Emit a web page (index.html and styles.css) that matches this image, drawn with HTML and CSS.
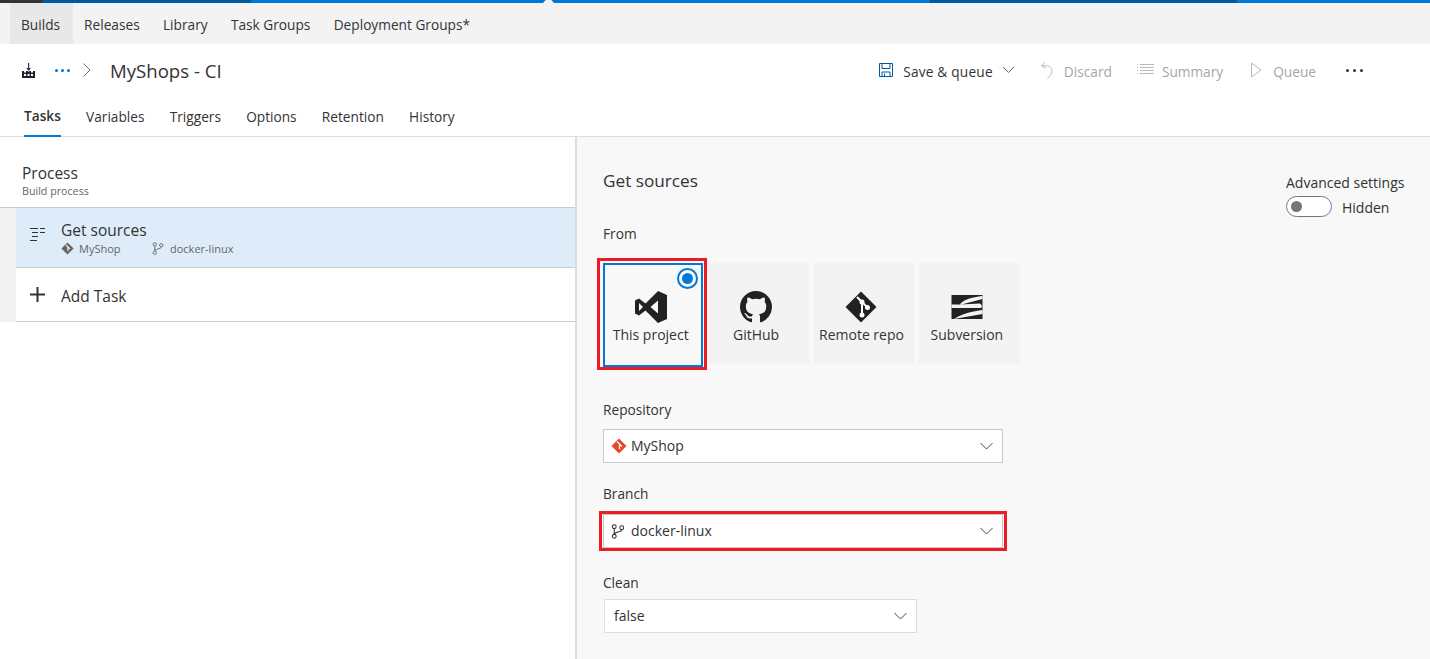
FILE: index.html
```html
<!doctype html>
<html>
  <head>
    <title>MyShops - CI</title>
    <meta name="viewport" content="width=device-width, initial-scale=1">
    <link rel="stylesheet" href="styles.css">
  </head>
  <body>
    <div class="strip">
      <span class="strip-a"></span><span class="strip-b"></span><span class="strip-c"></span><span class="strip-b strip-d"></span><span class="strip-c strip-e"></span>
    </div>

    <nav class="hub-nav">
      <a class="hub-item selected">Builds</a>
      <a class="hub-item">Releases</a>
      <a class="hub-item">Library</a>
      <a class="hub-item">Task Groups</a>
      <a class="hub-item">Deployment Groups*</a>
    </nav>

    <header class="title-row">
      <svg class="build-icon" width="16" height="16" viewBox="0 0 16 16"><path d="M8 1h1.200v5H11L8.600 9 6.200 6H8z" fill="#1b3a5c"/><path d="M2 9h2v1.500h2V9h1.500l1 1 1-1H11v1.500h2V9h2v7H2z" fill="#222"/><path d="M4 12h2v2H4zM7.500 12h2v2h-2zM11 12h2v2h-2z" fill="#fff"/></svg>
      <span class="crumb-dots"><i></i><i></i><i></i></span>
      <svg class="crumb-sep" width="10" height="16" viewBox="0 0 10 16"><path d="M1.500 1.500 8 8l-6.500 6.500" fill="none" stroke="#777" stroke-width="1"/></svg>
      <h1 class="def-name">MyShops - CI</h1>
      <div class="commands">
        <span class="cmd">
          <svg width="16" height="16" viewBox="0 0 16 16"><path d="M1.500 1.500h13v13h-13zM4 1.500v5h8v-5M4 14.500V10h8v4.500M6.500 11.500v3" fill="none" stroke="#005a9e" stroke-width="1"/></svg>
          <span class="cmd-label cmd-label-save">Save &amp; queue</span>
          <svg class="cmd-chevron" width="13" height="8" viewBox="0 0 13 8"><path d="M1 1l5.500 5.500L12 1" fill="none" stroke="#666"/></svg>
        </span>
        <span class="cmd off cmd-discard">
          <svg width="14" height="18" viewBox="0 0 14 18"><path d="M5 1 1.500 5 6 7M2 5c6-1.500 10 1 10 5 0 3-2 5-4.500 7.500" fill="none" stroke="#bbb"/></svg>
          <span class="cmd-label">Discard</span>
        </span>
        <span class="cmd off cmd-summary">
          <svg width="17" height="12" viewBox="0 0 17 12"><path d="M0 .5h1M0 3.500h1M0 6.500h1M0 9.500h1M3 .5h14M3 3.500h14M3 6.500h14M3 9.500h14" stroke="#bbb"/></svg>
          <span class="cmd-label">Summary</span>
        </span>
        <span class="cmd off cmd-queue">
          <svg width="11" height="16" viewBox="0 0 11 16"><path d="M.5 1v14L10 8z" fill="none" stroke="#bbb"/></svg>
          <span class="cmd-label">Queue</span>
        </span>
        <span class="cmd-more"><i></i><i></i><i></i></span>
      </div>
    </header>

    <div class="tabs">
      <a class="tab active">Tasks</a>
      <a class="tab">Variables</a>
      <a class="tab">Triggers</a>
      <a class="tab">Options</a>
      <a class="tab">Retention</a>
      <a class="tab">History</a>
    </div>

    <main class="editor">
      <section class="process">
        <div class="process-head">
          <div class="process-title">Process</div>
          <div class="process-sub">Build process</div>
        </div>
        <div class="phase-list">
          <div class="phase selected">
            <svg class="phase-icon phase-icon-sources" width="16" height="14" viewBox="0 0 16 14"><path d="M0 .5h8M10 .5h5M2 4.500h6M10 4.500h5M2 8.500h6M0 12.500h7" stroke="#333" fill="none"/></svg>
            <div>
              <div class="phase-name">Get sources</div>
              <div class="phase-meta">
                <svg width="13" height="13" viewBox="0 0 16 16"><path d="M8 .5 15.500 8 8 15.500.5 8z" fill="#666"/><path d="M6 3.500 8.500 6v5M8.500 6 11 8.500" stroke="#fff" stroke-width="1.300" fill="none"/></svg>
                <span class="meta-repo">MyShop</span>
                <svg width="12" height="13" viewBox="0 0 12 14"><circle cx="2.500" cy="2.500" r="1.800" fill="none" stroke="#666"/><circle cx="2.500" cy="11.500" r="1.800" fill="none" stroke="#666"/><circle cx="9.500" cy="3.500" r="1.800" fill="none" stroke="#666"/><path d="M2.500 4.500v5M9.500 5.500c0 2-7 2-7 4" fill="none" stroke="#666"/></svg>
                <span class="meta-branch">docker-linux</span>
              </div>
            </div>
          </div>
          <div class="phase add">
            <svg class="phase-icon" width="16" height="16" viewBox="0 0 16 16"><path d="M6.500 0h2v6.500H15v2H8.500V15h-2V8.500H0v-2h6.500z" fill="#333"/></svg>
            <div class="phase-name">Add Task</div>
          </div>
        </div>
      </section>

      <section class="details">
        <div class="advanced">
          <div>Advanced settings</div>
          <div class="toggle-row"><span class="toggle"><i></i></span><span class="toggle-label">Hidden</span></div>
        </div>

        <h2 class="details-title">Get sources</h2>

        <label class="field-label">From</label>
        <div class="sources">
          <div class="source selected">
            <span class="radio"><i></i></span>
            <svg width="32" height="32" viewBox="0 0 32 32"><path d="M23 0l9 4v24l-9 4-12.500-12.500L4 24.500l-4-2v-13l4-2 6.500 5zM23 9.500 15.500 16l7.500 6.500zM4 12v8l4-4z" fill="#222" fill-rule="evenodd"/></svg>
            <span class="source-name">This project</span>
          </div>
          <div class="source">
            <svg width="32" height="32" viewBox="0 0 16 16"><path d="M8 0C3.580 0 0 3.580 0 8c0 3.540 2.290 6.530 5.470 7.590.4.070.55-.17.55-.38 0-.19-.01-.82-.01-1.490-2.010.37-2.530-.49-2.690-.94-.09-.23-.48-.94-.82-1.130-.28-.15-.68-.52-.01-.53.630-.01 1.080.58 1.230.82.720 1.210 1.870.87 2.330.66.070-.52.280-.87.510-1.070-1.780-.2-3.640-.89-3.640-3.950 0-.87.310-1.590.820-2.150-.08-.2-.36-1.020.08-2.120 0 0 .67-.21 2.200.82.640-.18 1.320-.27 2-.27s1.360.09 2 .27c1.530-1.040 2.200-.82 2.200-.82.440 1.100.160 1.920.08 2.120.51.560.82 1.270.82 2.150 0 3.070-1.870 3.750-3.650 3.950.290.250.540.730.540 1.480 0 1.070-.01 1.930-.01 2.200 0 .21.150.46.550.38A8.010 8.010 0 0 0 16 8c0-4.420-3.580-8-8-8z" fill="#222"/></svg>
            <span class="source-name">GitHub</span>
          </div>
          <div class="source">
            <svg width="32" height="32" viewBox="0 0 32 32"><path d="M16 .5 31.500 16 16 31.500.5 16z" fill="#222"/><path d="M12 6l5 5v13M17 11l5.500 5.500" stroke="#fff" stroke-width="2" fill="none"/><circle cx="17" cy="24" r="2.500" fill="#fff"/><circle cx="22.500" cy="16.500" r="2.500" fill="#fff"/><circle cx="17" cy="11" r="2.500" fill="#fff"/></svg>
            <span class="source-name">Remote repo</span>
          </div>
          <div class="source">
            <svg width="32" height="32" viewBox="0 -4 32 32"><path d="M.5 0h31v24H.5z" fill="#222"/><path d="M31.500 1C21 2 11 5 8.500 10l23-6zM.5 9.500h9L29 8.500c2.500 2 2.500 4 .5 4.500H.5zM31.500 15C22 16 10 19 3 24l28.500-5z" fill="#f3f3f3"/></svg>
            <span class="source-name">Subversion</span>
          </div>
        </div>

        <label class="field-label label-repo">Repository</label>
        <div class="combo combo-wide">
          <svg class="repo-icon" width="16" height="16" viewBox="0 0 16 16"><path d="M8 .5 15.500 8 8 15.500.5 8z" fill="#e8472b"/><path d="M6 3.500 8.500 6v5M8.500 6 11 8.500" stroke="#fff" stroke-width="1.300" fill="none"/></svg>
          <span class="combo-value">MyShop</span>
          <svg class="combo-chevron" width="13" height="8" viewBox="0 0 13 8"><path d="M.5 1l6 6 6-6" fill="none" stroke="#444"/></svg>
        </div>

        <label class="field-label label-branch">Branch</label>
        <div class="combo combo-wide combo-flagged">
          <svg width="14" height="15" viewBox="0 0 12 14"><circle cx="2.500" cy="2.500" r="1.800" fill="none" stroke="#333"/><circle cx="2.500" cy="11.500" r="1.800" fill="none" stroke="#333"/><circle cx="9.500" cy="3.500" r="1.800" fill="none" stroke="#333"/><path d="M2.500 4.500v5M9.500 5.500c0 2-7 2-7 4" fill="none" stroke="#333"/></svg>
          <span class="combo-value">docker-linux</span>
          <svg class="combo-chevron" width="13" height="8" viewBox="0 0 13 8"><path d="M.5 1l6 6 6-6" fill="none" stroke="#444"/></svg>
        </div>

        <label class="field-label label-clean">Clean</label>
        <div class="combo combo-narrow">
          <span class="combo-value">false</span>
          <svg class="combo-chevron" width="13" height="8" viewBox="0 0 13 8"><path d="M.5 1l6 6 6-6" fill="none" stroke="#444"/></svg>
        </div>
      </section>
    </main>
  </body>
</html>
```

FILE: styles.css
```css
* {
    box-sizing: border-box;
}
html, body {
    height: 100%;
}
body {
    margin: 0;
    overflow: hidden;
    display: flex;
    flex-direction: column;
    font-family: "Open Sans", sans-serif;
    font-size: 13.7px;
    color: #333;
    background: #fff;
}

/* Top colour strip */
.strip {
    position: relative;
    display: flex;
    height: 3px;
    flex: none;
}
.strip::after {
    content: "";
    position: absolute;
    top: 0;
    left: 543px;
    width: 11px;
    height: 3px;
    background: #f3f3f3;
    clip-path: polygon(25% 0, 75% 0, 100% 100%, 0 100%);
}
.strip-a {
    width: 42px;
    background: #333;
}
.strip-b {
    width: 209px;
    background: #005a9e;
}
.strip-c {
    width: 679px;
    background: #0078d7;
}
.strip-d {
    width: 307px;
}
.strip-e {
    flex: 1;
}

/* Hub navigation */
.hub-nav {
    display: flex;
    flex: none;
    height: 41px;
    padding-left: 10px;
    background: #f3f3f3;
}
.hub-item {
    display: flex;
    align-items: center;
    padding: 1px 11px 0;
    margin-right: 1.3px;
}
.hub-item.selected {
    padding-right: 13px;
    margin-right: 0;
    background: #e8e8e8;
}

/* Title row */
.title-row {
    display: flex;
    flex: none;
    align-items: center;
    height: 52px;
    padding-left: 20px;
}
.crumb-dots {
    display: flex;
    gap: 3px;
    margin-left: 19px;
}
.crumb-dots i {
    width: 3px;
    height: 3px;
    border-radius: 50%;
    background: #0078d7;
}
.crumb-sep {
    margin-left: 12px;
}
.def-name {
    margin: 0 0 0 18px;
    font-size: 18.6px;
    font-weight: 400;
}
.commands {
    display: flex;
    align-items: center;
    margin-left: auto;
    padding-right: 67px;
}
.cmd {
    display: flex;
    align-items: center;
    gap: 9px;
}
.cmd-label {
    padding-top: 3px;
}
.cmd-label-save {
    letter-spacing: 0.2px;
}
.cmd.off {
    color: #a6a6a6;
}
.cmd-discard {
    margin-left: 25px;
    gap: 10px;
}
.cmd-summary {
    margin-left: 25px;
    gap: 8px;
}
.cmd-queue {
    margin-left: 28px;
    gap: 11px;
}
.cmd-more {
    display: flex;
    gap: 4px;
    margin-left: 30px;
}
.cmd-more i {
    width: 3px;
    height: 3px;
    border-radius: 50%;
    background: #333;
}

/* Tabs */
.tabs {
    display: flex;
    flex: none;
    gap: 25.2px;
    height: 41px;
    padding-left: 24px;
    border-bottom: 1px solid #ddd;
}
.tab {
    display: flex;
    align-items: center;
    margin-bottom: -1px;
}
.tab.active {
    font-weight: 600;
    border-bottom: 2px solid #0078d7;
}

/* Editor split */
.editor {
    display: flex;
    flex: 1;
    min-height: 0;
}
.process {
    width: 577px;
    flex: none;
    border-right: 2px solid #ddd;
}
.process-head {
    height: 70px;
    padding: 26px 0 0 22px;
}
.process-title {
    font-size: 15.5px;
    line-height: 21px;
}
.process-sub {
    font-size: 10.7px;
    line-height: 14px;
    color: #666;
}
.phase-list {
    padding-left: 16px;
    background: linear-gradient(#f3f3f3, #f3f3f3) no-repeat 0 0 / 16px 100%;
    border-top: 1px solid #ccc;
}
.phase {
    display: flex;
    align-items: center;
    gap: 15px;
    padding-left: 14px;
    background: #fff;
    border-bottom: 1px solid #ccc;
}
.phase.selected {
    height: 60px;
    background: #deecf9;
}
.phase.add {
    height: 54px;
}
.phase.add .phase-name {
    padding-top: 2px;
}
.phase-icon-sources {
    margin-top: -6px;
}
.phase-name {
    font-size: 15.5px;
    line-height: 20px;
}
.phase-meta {
    display: flex;
    align-items: center;
    margin-top: 1px;
    font-size: 11px;
    line-height: 15px;
    color: #666;
}
.meta-repo {
    width: 73px;
    margin-left: 5px;
}
.meta-branch {
    margin-left: 6px;
}

/* Details pane */
.details {
    position: relative;
    flex: 1;
    padding: 32px 0 0 26px;
    background: #f8f8f8;
}
.details-title {
    margin: 0 0 31px;
    font-size: 17.2px;
    font-weight: 400;
    line-height: 24px;
}
.field-label {
    display: block;
    line-height: 20px;
}
.advanced {
    position: absolute;
    top: 36px;
    left: 709px;
    font-size: 14px;
    line-height: 20px;
}
.toggle-row {
    display: flex;
    align-items: flex-start;
    gap: 10px;
    margin-top: 3px;
}
.toggle-label {
    margin-top: 2px;
}
.toggle {
    display: flex;
    align-items: center;
    width: 46px;
    height: 21px;
    padding-left: 4px;
    border: 1px solid #767676;
    border-radius: 11px;
    background: #fff;
}
.toggle i {
    width: 11px;
    height: 11px;
    border-radius: 50%;
    background: #767676;
}

/* Source tiles */
.sources {
    display: flex;
    align-items: flex-start;
    gap: 5px;
    height: 101px;
    margin-top: 19px;
    font-size: 14px;
}
.source {
    position: relative;
    display: flex;
    flex-direction: column;
    align-items: center;
    flex: none;
    width: 100.4px;
    height: 101px;
    padding: 28px 5px 0 0;
    background: #f3f3f3;
}
.source svg {
    margin-bottom: 2px;
}
.source-name {
    line-height: 20px;
}
.source.selected {
    height: 104px;
    padding-top: 26px;
    background: #f8f8f8;
    border: 2px solid #0078d7;
}
.source.selected::after {
    content: "";
    position: absolute;
    top: -7px;
    right: -6px;
    bottom: -5px;
    left: -8px;
    border: 3px solid #ed1c24;
}
.radio {
    position: absolute;
    top: 3px;
    right: 3.5px;
    display: flex;
    align-items: center;
    justify-content: center;
    width: 21px;
    height: 21px;
    border: 2px solid #0078d7;
    border-radius: 50%;
    background: #fff;
}
.radio i {
    width: 11px;
    height: 11px;
    border-radius: 50%;
    background: #0078d7;
}

/* Combos */
.combo {
    position: relative;
    display: flex;
    align-items: center;
    gap: 6px;
    height: 34px;
    padding: 0 9px 0 7px;
    font-size: 14px;
    background: #fff;
    border: 1px solid #c8c8c8;
}
.combo-value {
    padding-bottom: 2px;
}
.repo-icon {
    margin-right: -2px;
}
.combo-wide {
    width: 400px;
}
.combo-narrow {
    width: 313px;
    margin-left: 1px;
    padding-left: 9px;
    border-color: #ddd;
}
.combo-flagged::after {
    content: "";
    position: absolute;
    top: -4px;
    right: -5px;
    bottom: -4px;
    left: -5px;
    border: 3px solid #ed1c24;
}
.combo-chevron {
    margin-left: auto;
}
.label-repo {
    margin-top: 36px;
    margin-bottom: 9px;
}
.label-branch {
    margin-top: 21px;
    margin-bottom: 10px;
}
.label-clean {
    margin-top: 25px;
    margin-bottom: 6px;
}
```
